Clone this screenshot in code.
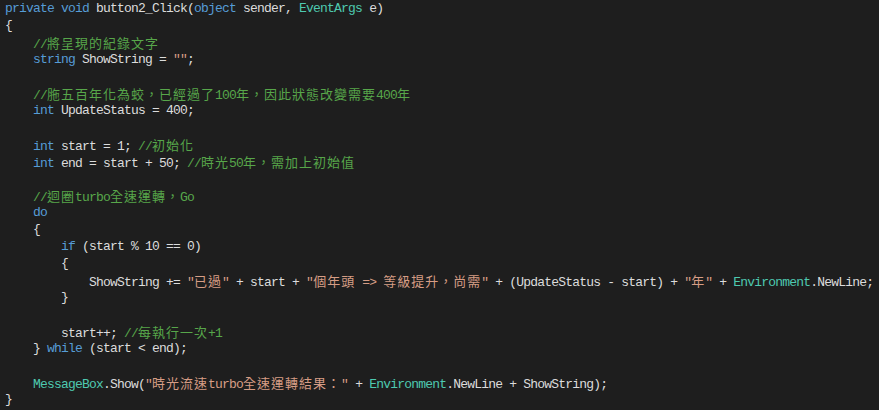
import React from 'react';

const colors = {
    kw: 'text-[#569cd6]',
    type: 'text-[#4ec9b0]',
    cm: 'text-[#57a64a]',
    str: 'text-[#d69d85]',
    tx: 'text-[#dcdcdc]',
};

// split a string into ascii / cjk runs so the wide glyphs get a double cell
const renderRuns = (text) => {
    const parts = text.match(/[\u3000-\u9fff\uff00-\uffef]+|[^\u3000-\u9fff\uff00-\uffef]+/g) || [];
    return parts.map((p, i) =>
        /[\u3000-\u9fff\uff00-\uffef]/.test(p) ? (
            <span key={i} className="text-[13px] tracking-[1px] font-['Noto_Sans_CJK_TC',sans-serif]">{p}</span>
        ) : (
            <span key={i}>{p}</span>
        )
    );
};

const lines = [
    [['kw', 'private'], ['tx', ' '], ['kw', 'void'], ['tx', ' button2_Click('], ['kw', 'object'], ['tx', ' sender, '], ['type', 'EventArgs'], ['tx', ' e)']],
    [['tx', '{']],
    [['cm', '    //將呈現的紀錄文字']],
    [['tx', '    '], ['kw', 'string'], ['tx', ' ShowString = '], ['str', '""'], ['tx', ';']],
    [],
    [['cm', '    //胣五百年化為蛟，已經過了100年，因此狀態改變需要400年']],
    [['tx', '    '], ['kw', 'int'], ['tx', ' UpdateStatus = 400;']],
    [],
    [['tx', '    '], ['kw', 'int'], ['tx', ' start = 1; '], ['cm', '//初始化']],
    [['tx', '    '], ['kw', 'int'], ['tx', ' end = start + 50; '], ['cm', '//時光50年，需加上初始值']],
    [],
    [['cm', '    //迴圈turbo全速運轉，Go']],
    [['tx', '    '], ['kw', 'do']],
    [['tx', '    {']],
    [['tx', '        '], ['kw', 'if'], ['tx', ' (start % 10 == 0)']],
    [['tx', '        {']],
    [['tx', '            ShowString += '], ['str', '"已過"'], ['tx', ' + start + '], ['str', '"個年頭 => 等級提升，尚需"'], ['tx', ' + (UpdateStatus - start) + '], ['str', '"年"'], ['tx', ' + '], ['type', 'Environment'], ['tx', '.NewLine;']],
    [['tx', '        }']],
    [],
    [['tx', '        start++; '], ['cm', '//每執行一次+1']],
    [['tx', '    } '], ['kw', 'while'], ['tx', ' (start < end);']],
    [],
    [['tx', '    '], ['type', 'MessageBox'], ['tx', '.Show('], ['str', '"時光流速turbo全速運轉結果："'], ['tx', ' + '], ['type', 'Environment'], ['tx', '.NewLine + ShowString);']],
    [['tx', '}']],
];

const App = () => {
    return (
        <div className="w-[879px] h-[410px] bg-[#1e1e1e] overflow-hidden pl-[5px] font-['Liberation_Mono',monospace] text-[13px] tracking-[-0.8px] leading-[17px]">
            {lines.map((line, i) => (
                <div key={i} className="h-[17px] whitespace-pre">
                    {line.map(([kind, text], j) => (
                        <span key={j} className={colors[kind]}>{renderRuns(text)}</span>
                    ))}
                </div>
            ))}
        </div>
    );
};

export default App;
